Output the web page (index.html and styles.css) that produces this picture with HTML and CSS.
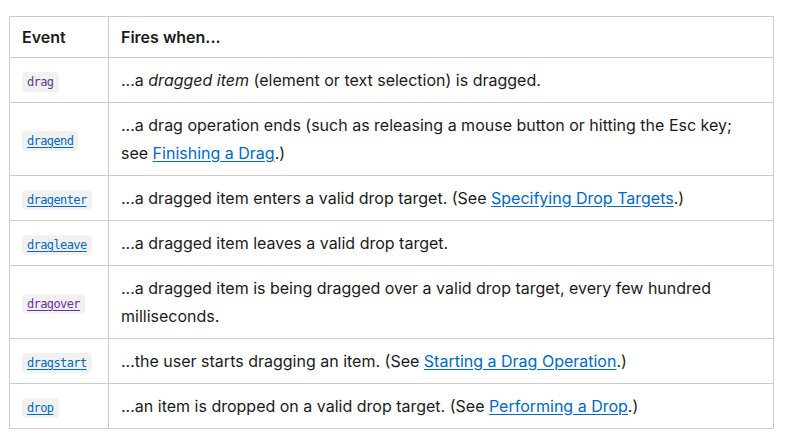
FILE: index.html
```html
<!DOCTYPE html>
<html>
<head>
<meta charset="utf-8">
<link rel="stylesheet" href="styles.css">
</head>
<body>
<div class="wrap">
<table class="events">
<thead>
<tr><th class="col-event">Event</th><th>Fires when...</th></tr>
</thead>
<tbody>
<tr><td><code class="c plain">drag</code></td><td>...a <em>dragged item</em> (element or text selection) is dragged.</td></tr>
<tr><td><a class="c link" href="#">dragend</a></td><td>...a drag operation ends (such as releasing a mouse button or hitting the Esc key; see <a class="link" href="#">Finishing a Drag</a>.)</td></tr>
<tr><td><a class="c link" href="#">dragenter</a></td><td>...a dragged item enters a valid drop target. (See <a class="link" href="#">Specifying Drop Targets</a>.)</td></tr>
<tr><td><a class="c link" href="#">dragleave</a></td><td>...a dragged item leaves a valid drop target.</td></tr>
<tr><td><a class="c visited" href="#">dragover</a></td><td>...a dragged item is being dragged over a valid drop target, every few hundred milliseconds.</td></tr>
<tr><td><a class="c link" href="#">dragstart</a></td><td>...the user starts dragging an item. (See <a class="link" href="#">Starting a Drag Operation</a>.)</td></tr>
<tr><td><a class="c link" href="#">drop</a></td><td>...an item is dropped on a valid drop target. (See <a class="link" href="#">Performing a Drop</a>.)</td></tr>
</tbody>
</table>
</div>
</body>
</html>
```
FILE: styles.css
```css
html, body {
  margin: 0;
  padding: 0;
  background: #ffffff;
}
body {
  font-family: Inter, "Noto Sans", sans-serif;
  font-size: 16px;
  color: #1b1b1b;
}
.wrap {
  padding: 16px 0 0 9px;
}
.events {
  border-collapse: collapse;
  width: 765px;
}
.events th,
.events td {
  border: 1px solid #cdcdcd;
  padding: 8px 12px;
  text-align: left;
  vertical-align: middle;
}
.events th {
  font-weight: 600;
  line-height: 24px;
}
.events td {
  line-height: 28px;
}
.col-event {
  width: 74px;
}
.c {
  font-family: "DejaVu Sans Mono", "Liberation Mono", monospace;
  font-size: 12px;
  letter-spacing: -0.6px;
  background: #f2f1f1;
  border-radius: 4px;
  padding: 3px 5px 3px 5px;
  line-height: 18px;
}
.plain {
  color: #5a3a8c;
}
.link {
  color: #0069c2;
  text-decoration: underline;
  text-underline-offset: 2px;
}
.visited {
  color: #6e2ea3;
  text-decoration: underline;
  text-underline-offset: 2px;
}
```
